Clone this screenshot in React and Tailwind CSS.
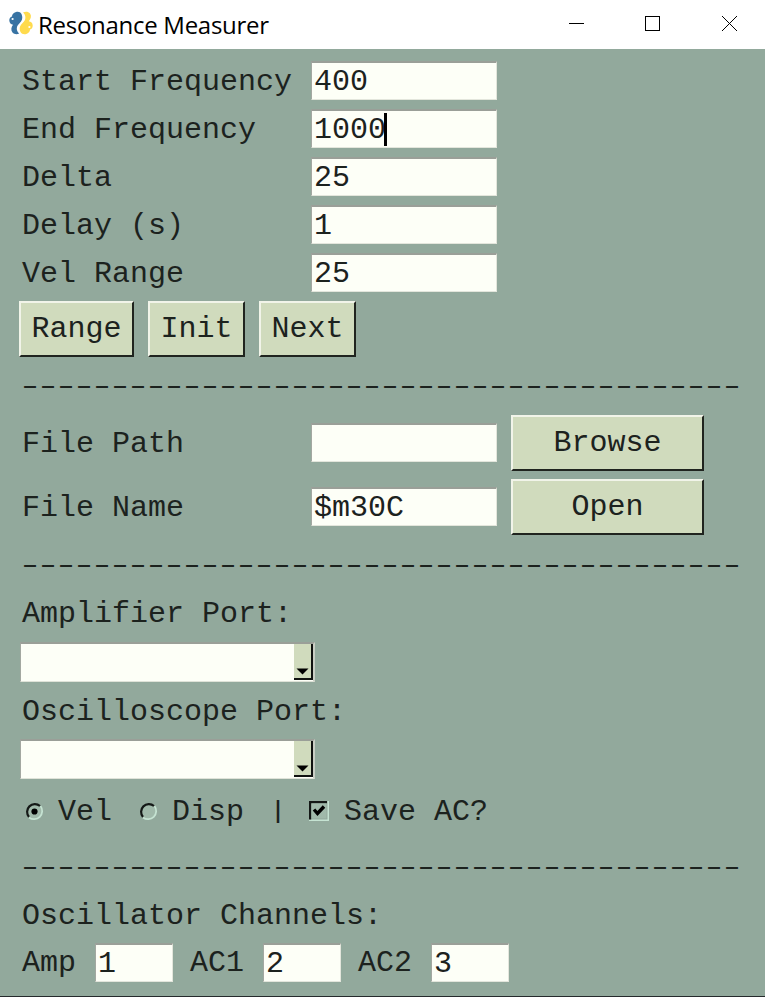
import React from "react";

const label = "block h-[34px] leading-[34px] whitespace-pre";
const dashes = "-".repeat(40);

function Field({ value = "", caret = false, className = "w-[186px]" }) {
  return (
    <div className={`flex h-[39px] shrink-0 items-center border border-t-2 border-t-[#9a9f98] border-l-[#a3a8a1] border-r-[#e3e6dc] border-b-[#e3e6dc] bg-[#fdfff7] pl-[2px] ${className}`}>
      <span className="pt-px leading-[34px]">{value}</span>
      {caret && <span className="-ml-[2px] h-[33px] w-[3px] bg-black" />}
    </div>
  );
}

function Row({ text, children, className = "h-12 pt-1" }) {
  return (
    <div className={`flex items-start ${className}`}>
      <span className={`${label} mt-1 w-[288px] pl-[2px]`}>{text}</span>
      <span className="w-[3px] shrink-0" />
      {children}
    </div>
  );
}

function Button({ children, className }) {
  return (
    <div className={`flex h-14 shrink-0 items-center justify-center border-2 border-t-[#f1f4e9] border-l-[#f1f4e9] border-r-[#20241f] border-b-[#20241f] bg-[#d0dbbd] leading-[34px] ${className}`}>
      {children}
    </div>
  );
}

function Divider({ className }) {
  return (
    <div className={`flex shrink-0 items-center ${className}`}>
      <span className="mt-[2px] -ml-[3px] block w-[497px] origin-left scale-x-[1.45] scale-y-[.85] leading-none tracking-[-5.59px] whitespace-nowrap">{dashes}</span>
    </div>
  );
}

function Combo() {
  return (
    <div className="flex h-[40px] w-[295px] shrink-0 border border-t-2 border-r-2 border-t-[#9a9f98] border-l-[#a3a8a1] border-r-[#c9cec4] border-b-[#dfe3d8] bg-[#fdfff7]">
      <div className="mb-px ml-auto flex w-[19px] items-end justify-center border-r-2 border-b-2 border-[#101210] bg-[#d0dbbd] pb-[3px]">
        <svg width="13" height="7" viewBox="0 0 13 7"><path d="M0.5 0.5H12.5L6.5 6.5Z" fill="#000" /></svg>
      </div>
    </div>
  );
}

function Radio({ checked }) {
  return (
    <svg width="19" height="19" viewBox="0 0 19 19" fill="none" className="shrink-0">
      <circle cx="9.5" cy="9.5" r="7.5" fill="#a0b9aa" />
      <path d="M4 15A7.8 7.8 0 0 1 15 4" stroke="#141816" strokeWidth="2.2" />
      <path d="M15.5 4A8.2 8.2 0 0 1 4 15.5" stroke="#c5e3d2" strokeWidth="1.8" />
      {checked && <circle cx="9.5" cy="9.5" r="3.1" fill="#000" />}
    </svg>
  );
}

export default function App() {
  return (
    <div className="flex h-[997px] w-[765px] flex-col overflow-hidden bg-[#92a99c] text-[#1c221e]">
      <header className="flex h-[49px] shrink-0 items-center bg-white pl-[9px] text-black">
        <svg width="24" height="24" viewBox="0 0 24 24" className="mb-[3px] shrink-0">
          <path d="M7 1C9 .2 11.5 .8 12.5 3C13.6 5.5 13.7 8 12 10.5C10.5 12.5 8 14 7.8 17C7.6 19.5 8.8 21.5 10.2 22.5C8 23.7 5 23.3 3.5 21.5C1.8 19.5 2 16.5 4 13.8C2 13.5 .3 11.8 .3 9.5C.3 7.5 1.2 6 3 5.5C3 3.3 4.5 1.8 7 1Z" fill="#3873a3" />
          <path d="M14 1.5C16.5 .1 19.5 .5 21 2.5C22.7 4.8 22 7.8 19.8 10.3C22 10.6 23.7 12 23.7 14.4C23.7 16.5 22.7 18 21 18.4C21 20.7 19.5 22.2 17.3 23C15 23.7 12.6 23 11.5 21C10.2 18.3 10.4 15.7 12.2 13.5C14 11.3 16.3 9.8 16.4 7C16.5 4.5 15.5 2.5 14 1.5Z" fill="#ffdb4d" />
          <circle cx="3.6" cy="8" r="1.1" fill="#fff" />
          <circle cx="20.4" cy="16" r="1.1" fill="#fff" />
        </svg>
        <span className="ml-[5px] w-[236px] font-['Open_Sans','Noto_Sans',sans-serif] text-[24px] tracking-[-0.28px] whitespace-nowrap">Resonance Measurer</span>
        <svg width="168" height="17" viewBox="0 0 168 17" fill="none" stroke="#000" className="mr-[28px] mb-[2px] ml-auto shrink-0">
          <path d="M0 8.5H15" />
          <rect x="76.5" y="1.5" width="14" height="14" />
          <path d="M153 1L168 16M168 1L153 16" />
        </svg>
      </header>

      <main className="flex flex-1 flex-col pt-2 pl-5 font-['Liberation_Mono',monospace] text-[30px] leading-[34px]">
        <Row text="Start Frequency"><Field value="400" /></Row>
        <Row text="End Frequency"><Field value="1000" caret /></Row>
        <Row text="Delta"><Field value="25" /></Row>
        <Row text="Delay (s)"><Field value="1" /></Row>
        <Row text="Vel Range"><Field value="25" /></Row>

        <div className="-ml-px flex h-16 shrink-0 gap-[14px] pt-1">
          <Button className="w-[115px]">Range</Button>
          <Button className="w-[97px]">Init</Button>
          <Button className="w-[97px]">Next</Button>
        </div>

        <Divider className="h-[50px]" />

        <div className="flex h-16 shrink-0 pt-1">
          <Row text="File Path" className="pt-2"><Field /></Row>
          <Button className="ml-[14px] w-[193px]">Browse</Button>
        </div>
        <div className="flex h-[65px] shrink-0 pt-1">
          <Row text="File Name" className="pt-2"><Field value="$m30C" /></Row>
          <Button className="ml-[14px] w-[193px]">Open</Button>
        </div>

        <Divider className="h-[49px]" />

        <div className="h-[53px] shrink-0 pt-2 pl-[2px]"><span className={label}>Amplifier Port:</span></div>
        <Combo />
        <div className="h-[57px] shrink-0 pt-[13px] pl-[2px]"><span className={label}>Oscilloscope Port:</span></div>
        <Combo />

        <div className="flex h-[64px] shrink-0 items-center pl-[5px]">
          <Radio checked />
          <span className="ml-[14px] w-[81px] pt-[2px]">Vel</span>
          <Radio />
          <span className="ml-[14px] w-[97px] pt-[2px]">Disp</span>
          <span className="w-[40px] pt-[2px]"><span className="inline-block origin-center scale-y-[.8]">|</span></span>
          <svg width="20" height="20" viewBox="0 0 20 20" fill="none" className="shrink-0">
            <path d="M0 20H20V0" stroke="#c5e3d2" strokeWidth="3" />
            <path d="M1 18.5V1H18" stroke="#141816" strokeWidth="2.4" />
            <rect x="2.5" y="2.5" width="15" height="15" fill="#a0b9aa" />
            <path d="M5 8.5L8.5 12.5L15 5.5" stroke="#000" strokeWidth="3.4" />
          </svg>
          <span className="ml-[15px] pt-[2px] whitespace-nowrap">Save AC?</span>
        </div>

        <Divider className="h-[48px]" />

        <div className="h-[52px] shrink-0 pt-2 pl-[2px]"><span className={label}>Oscillator Channels:</span></div>
        <div className="flex shrink-0 items-center">
          <span className="w-[75px] pt-px pl-[2px]">Amp</span>
          <Field value="1" className="w-[78px]" />
          <span className="w-[90px] pt-px pl-[17px]">AC1</span>
          <Field value="2" className="w-[78px]" />
          <span className="w-[90px] pt-px pl-[17px]">AC2</span>
          <Field value="3" className="w-[78px]" />
        </div>
      </main>
      <div className="h-px shrink-0 bg-[#252a2c]" />
    </div>
  );
}
